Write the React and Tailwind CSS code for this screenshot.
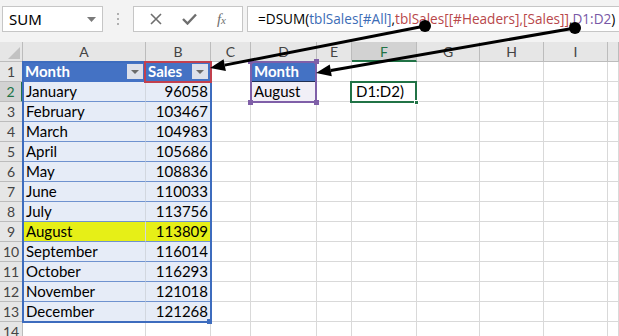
import React from 'react';

const cols = [
  { id: 'A', w: 'w-[123px]' },
  { id: 'B', w: 'w-[65px]' },
  { id: 'C', w: 'w-[40px]' },
  { id: 'D', w: 'w-[66px]' },
  { id: 'E', w: 'w-[35px]' },
  { id: 'F', w: 'w-[65px]' },
  { id: 'G', w: 'w-[63px]' },
  { id: 'H', w: 'w-[64px]' },
  { id: 'I', w: 'w-[64px]' },
  { id: '', w: 'flex-1' },
];

const sales = [
  ['January', '96058'],
  ['February', '103467'],
  ['March', '104983'],
  ['April', '105686'],
  ['May', '108836'],
  ['June', '110033'],
  ['July', '113756'],
  ['August', '113809'],
  ['September', '116014'],
  ['October', '116293'],
  ['November', '121018'],
  ['December', '121268'],
];

const cellFont = { fontFamily: 'Lato, "Liberation Sans", sans-serif' };

function Arrow({ x1, y1, x2, y2 }) {
  const dx = x2 - x1;
  const dy = y2 - y1;
  const len = Math.hypot(dx, dy);
  const ux = dx / len;
  const uy = dy / len;
  const bx = x2 - ux * 15;
  const by = y2 - uy * 15;
  const pts = [
    [x2, y2],
    [bx + uy * 6, by - ux * 6],
    [bx - uy * 6, by + ux * 6],
  ]
    .map((p) => p.join(','))
    .join(' ');
  return (
    <g>
      <line x1={x1} y1={y1} x2={bx} y2={by} stroke="#000" strokeWidth="3" />
      <circle cx={x1} cy={y1} r="6" fill="#000" />
      <polygon points={pts} fill="#000" />
    </g>
  );
}

function Toolbar() {
  return (
    <div className="h-[42px] bg-[#f3f3f3] flex items-start pt-[6px] pl-[2px]">
      <div className="w-[101px] h-[26px] bg-white border border-[#c6c6c6] flex items-center justify-between pl-[6px] pr-[6px]">
        <span className="text-[15px] text-black" style={{ fontFamily: '"Noto Sans", sans-serif' }}>SUM</span>
        <svg width="9" height="5" viewBox="0 0 9 5"><path d="M0 0h9L4.5 5z" fill="#7a7a7a" /></svg>
      </div>
      <div className="w-[30px] h-[26px] flex flex-col items-center justify-center gap-[3px]">
        <span className="w-[2px] h-[2px] bg-[#b0b0b0]" />
        <span className="w-[2px] h-[2px] bg-[#b0b0b0]" />
        <span className="w-[2px] h-[2px] bg-[#b0b0b0]" />
      </div>
      <div className="w-[110px] h-[26px] bg-white border border-[#c6c6c6] flex items-center justify-around px-[6px]">
        <svg width="12" height="12" viewBox="0 0 12 12"><path d="M1 1l10 10M11 1L1 11" stroke="#6e6e6e" strokeWidth="1.6" /></svg>
        <svg width="15" height="12" viewBox="0 0 15 12"><path d="M1 6l4.5 4.5L14 1.5" stroke="#6e6e6e" strokeWidth="2.4" fill="none" /></svg>
        <span className="text-[15px] italic text-[#6e6e6e]" style={{ fontFamily: '"Liberation Serif", serif' }}>f<span className="text-[11px]">x</span></span>
      </div>
      <div className="ml-[4px] flex-1 h-[26px] bg-white border border-[#c6c6c6] border-r-0 flex items-center pl-[10px] whitespace-nowrap overflow-hidden">
        <span className="text-[13.6px] text-black" style={{ fontFamily: '"Open Sans", sans-serif' }}>
          =DSUM(<span className="text-[#3c6cb6]">tblSales[#All]</span>,
          <span className="text-[#b8474a]">tblSales[[#Headers],[Sales]]</span>,
          <span className="text-[#7858a6]">D1:D2</span>)
        </span>
      </div>
    </div>
  );
}

function HeaderRow() {
  return (
    <div className="flex h-[20px]">
      <div className="w-[23px] border-r border-b border-[#bcbcbc] bg-[#e6e6e6] relative">
        <svg className="absolute right-[2px] bottom-[2px]" width="12" height="12" viewBox="0 0 12 12"><path d="M12 0v12H0z" fill="#c2c2c2" /></svg>
      </div>
      {cols.map((c) => (
        <div
          key={c.id || 'last'}
          className={`${c.w} border-r border-[#bcbcbc] flex items-center justify-center text-[14px] ${
            c.id === 'F'
              ? 'bg-[#d2d2d2] text-[#217346] border-b-2 border-b-[#217346]'
              : 'bg-[#e6e6e6] text-[#444] border-b border-b-[#bcbcbc]'
          }`}
          style={cellFont}
        >
          {c.id}
        </div>
      ))}
    </div>
  );
}

function RowHead({ n }) {
  const active = n === 2;
  return (
    <div
      className={`w-[23px] h-[20px] border-b border-[#bcbcbc] flex items-center justify-center text-[14px] ${
        active
          ? 'bg-[#d2d2d2] text-[#217346] border-r-2 border-r-[#217346]'
          : 'bg-[#e6e6e6] text-[#444] border-r border-r-[#bcbcbc]'
      }`}
      style={cellFont}
    >
      {n}
    </div>
  );
}

function Grid() {
  const rows = [];
  for (let r = 1; r <= 14; r++) {
    const data = r >= 2 && r <= 13 ? sales[r - 2] : null;
    rows.push(
      <div key={r} className="flex h-[20px] text-[15px] text-black" style={cellFont}>
        <RowHead n={r} />
        {cols.map((c) => {
          let cls = 'bg-white border-r border-b border-[#d9d9d9]';
          let content = null;
          if (r === 1 && (c.id === 'A' || c.id === 'B')) {
            cls = 'bg-[#4472c4] border-b border-[#4472c4] border-r border-r-[#4472c4] text-white font-bold';
            content = (
              <div className="flex items-center justify-between h-full pl-[2px] pr-[2px]">
                <span>{c.id === 'A' ? 'Month' : 'Sales'}</span>
                <span className="w-[16px] h-[15px] bg-[#dde0ea] flex items-center justify-center">
                  <svg width="8" height="4" viewBox="0 0 8 4"><path d="M0 0h8L4 4z" fill="#6b6b6b" /></svg>
                </span>
              </div>
            );
          } else if (data && (c.id === 'A' || c.id === 'B')) {
            const yellow = r === 9;
            cls = `${yellow ? 'bg-[#e6ef17]' : 'bg-[#e6ecf7]'} border-b border-b-[#6f92cf] border-r border-r-[#d2d7df]`;
            content =
              c.id === 'A' ? (
                <div className="pl-[3px] leading-[19px]">{data[0]}</div>
              ) : (
                <div className="pr-[2px] leading-[19px] text-right">{data[1]}</div>
              );
          } else if (r === 1 && c.id === 'D') {
            cls = 'bg-[#4472c4] border-b border-b-[#1f2f52] border-r border-r-[#4472c4] text-white font-bold';
            content = <div className="pl-[3px] leading-[19px]">Month</div>;
          } else if (r === 2 && c.id === 'D') {
            cls = 'bg-[#f1eff7] border-r border-b border-[#d9d9d9]';
            content = <div className="pl-[3px] leading-[19px]">August</div>;
          } else if (r === 2 && c.id === 'F') {
            content = <div className="pl-[4px] leading-[19px]">D1:D2)</div>;
          }
          return (
            <div key={c.id || 'last'} className={`${c.w} h-[20px] overflow-hidden whitespace-nowrap ${cls}`}>
              {content}
            </div>
          );
        })}
      </div>
    );
  }
  return <div>{rows}</div>;
}

export default function App() {
  return (
    <div className="relative w-[619px] h-[336px] overflow-hidden bg-white">
      <Toolbar />
      <HeaderRow />
      <Grid />

      {/* reference highlights */}
      <div className="absolute left-[22px] top-[61px] w-[190px] h-[262px] border-2 border-[#3d6cbe]" />
      <div className="absolute left-[207px] top-[319px] w-[5px] h-[5px] bg-[#3d6cbe]" />
      <div className="absolute left-[144px] top-[61px] w-[68px] h-[22px] border-2 border-[#c2404e]" />
      <div className="absolute left-[250px] top-[61px] w-[67px] h-[42px] border-2 border-[#7f5fa8]" />
      <div className="absolute left-[248px] top-[59px] w-[5px] h-[5px] bg-[#7f5fa8]" />
      <div className="absolute left-[314px] top-[59px] w-[5px] h-[5px] bg-[#7f5fa8]" />
      <div className="absolute left-[248px] top-[100px] w-[5px] h-[5px] bg-[#7f5fa8]" />
      <div className="absolute left-[314px] top-[100px] w-[5px] h-[5px] bg-[#7f5fa8]" />
      <div className="absolute left-[350px] top-[81px] w-[67px] h-[22px] border-2 border-[#217346]" />
      <div className="absolute left-[414px] top-[100px] w-[5px] h-[5px] bg-[#217346] border border-white" />

      <svg className="absolute left-0 top-0 pointer-events-none" width="619" height="336">
        <Arrow x1={425} y1={26} x2={210} y2={68} />
        <Arrow x1={575} y1={28} x2={316} y2={73} />
      </svg>
    </div>
  );
}
